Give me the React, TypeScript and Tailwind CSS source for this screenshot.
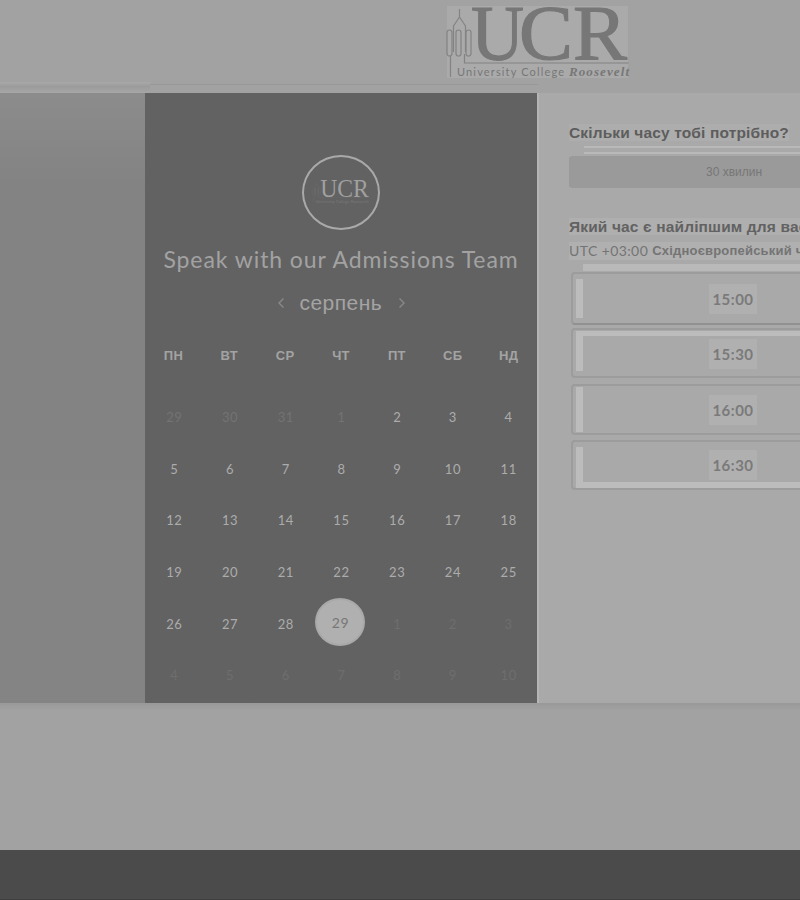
import React from "react";

const weekdays = ["ПН", "ВТ", "СР", "ЧТ", "ПТ", "СБ", "НД"];
const days = [
  29, 30, 31, 1, 2, 3, 4, 5, 6, 7, 8, 9, 10, 11, 12, 13, 14, 15, 16, 17, 18, 19,
  20, 21, 22, 23, 24, 25, 26, 27, 28, 29, 1, 2, 3, 4, 5, 6, 7, 8, 9, 10,
];
const slots = [
  { time: "15:00", box: "h-[53px] mb-[3px] border-b-[#919191]", inner: "border-l-[7px] my-[5px]" },
  { time: "15:30", box: "h-[50px] mb-[6px]", inner: "border-l-[7px] border-t-[5px] mt-[1px] mb-[5px]" },
  { time: "16:00", box: "h-[51px] mb-[5px]", inner: "border-l-[7px] my-[1px]" },
  { time: "16:30", box: "h-[50px]", inner: "border-l-[7px] border-b-[6px] mt-[5px]" },
];

function Wordmark() {
  return (
    <>
      <text x="30" y="59" textLength="53" lengthAdjust="spacingAndGlyphs" fontSize="79">U</text>
      <text x="78" y="59" textLength="54" lengthAdjust="spacingAndGlyphs" fontSize="79">C</text>
      <text x="132" y="59" textLength="54" lengthAdjust="spacingAndGlyphs" fontSize="79">R</text>
    </>
  );
}

function Tower() {
  return (
    <g fill="none" stroke="currentColor" strokeWidth="1.2">
      <rect x="6" y="30" width="5" height="26" rx="2.5" />
      <rect x="15" y="30" width="5" height="26" rx="2.5" />
      <rect x="25" y="30" width="5" height="26" rx="2.5" />
      <path d="M9.5 56v21M12.5 52V26l2-3 4-6 4 6 2 3v26M18.5 9v8M23.5 54v9h164" />
    </g>
  );
}

function HeaderLogo() {
  return (
    <svg width="195" height="82" viewBox="0 0 195 82" className="block text-[#777]">
      <rect x="6" y="6" width="181" height="72" fill="#aaa" />
      <g opacity="0.75"><Tower /></g>
      <g fill="currentColor" fontFamily="'Liberation Serif', serif">
        <g stroke="currentColor" strokeWidth="1.2"><Wordmark /></g>
        <text x="16" y="76" fontFamily="Lato, sans-serif" fontSize="11" textLength="107">
          University College
        </text>
        <text x="128" y="76" fontSize="13" fontStyle="italic" fontWeight="700" textLength="60">
          Roosevelt
        </text>
      </g>
    </svg>
  );
}

function Badge() {
  return (
    <div className="-ml-[1px] flex h-[75px] w-[78px] items-center justify-center rounded-[50%] border-2 border-[#a9a9a9]">
      <svg width="60" height="26" viewBox="0 0 195 82" className="-mt-1 text-[#777]">
        <g opacity="0.8"><Tower /></g>
        <g className="fill-[#a0a0a0]" fontFamily="'Liberation Serif', serif">
          <text x="30" y="61" textLength="158" lengthAdjust="spacingAndGlyphs" fontSize="79">UCR</text>
        </g>
        <text x="17" y="79" fill="#7c7c7c" fontFamily="Lato, sans-serif" fontSize="12" textLength="170">
          University College Roosevelt
        </text>
      </svg>
    </div>
  );
}

function Chevron({ d }: { d: string }) {
  return (
    <svg width="8" height="12" viewBox="0 0 8 12" fill="none" stroke="#898989" strokeWidth="1.4">
      <path d={d} />
    </svg>
  );
}

function Calendar() {
  return (
    <section className="flex h-[610px] w-[392px] shrink-0 flex-col items-center bg-[#626262] pt-[62px]">
      <Badge />
      <h1 className="mt-[13px] h-[32px] whitespace-nowrap font-['Lato',sans-serif] text-[23px] leading-[32px] tracking-[0.92px] text-[#a2a2a2]">
        Speak with our Admissions Team
      </h1>
      <div className="mt-[13px] flex h-[30px] items-center gap-[15px]">
        <Chevron d="M6.5 1.5 2 6l4.5 4.5" />
        <span className="w-[83px] whitespace-nowrap font-['Liberation_Sans',Arial,sans-serif] text-[21px] leading-[28px] tracking-[0.45px] text-[#a4a4a4]">
          серпень
        </span>
        <Chevron d="M1.5 1.5 6 6l-4.5 4.5" />
      </div>
      <div className="mt-[28px] grid w-[391px] grid-cols-7 text-center font-['Liberation_Sans',Arial,sans-serif] text-[13px] font-bold leading-[20px] tracking-[0.3px] text-[#a3a3a3]">
        {weekdays.map((d) => <span key={d}>{d}</span>)}
      </div>
      <div className="mt-[26px] grid h-[310px] w-[391px] shrink-0 grid-cols-7 grid-rows-6 pl-px font-['Lato',sans-serif] text-[13px] tracking-[0.6px]">
        {days.map((d, i) => {
          if (i === 31)
            return (
              <span key={i} className="-ml-[2px] -mt-[4px] flex items-center justify-center">
                <span className="flex h-[48px] w-[50px] shrink-0 items-center justify-center rounded-[50%] border-2 border-[#a9a9a9] bg-[#b0b0b0] text-[14px] text-[#777]">
                  29
                </span>
              </span>
            );
          const tone = i < 4 ? "text-[#737373]" : i > 31 ? "text-[#6e6e6e]" : "text-[#acacac]";
          return (
            <span key={i} className={`flex items-center justify-center ${tone}`}>{d}</span>
          );
        })}
      </div>
    </section>
  );
}

function TimePicker() {
  return (
    <section className="h-[610px] min-w-0 flex-1 overflow-hidden border-l-2 border-[#b5b5b5] bg-[#a9a9a9] pl-[30px] font-['Liberation_Sans',Arial,sans-serif]">
      <div className="w-[330px]">
        <h2 className="mt-[29px] h-[21px] whitespace-nowrap text-[15.5px] font-bold leading-[21px] tracking-[0.14px] text-[#5d5d5d]">
          <span className="bg-[#adadad]">Скільки часу тобі потрібно?</span>
        </h2>
        <div className="ml-[15px] mt-[3px] h-[8px] border-y-2 border-[#b9b9b9]" />
        <div className="mt-[2px] h-[32px] rounded-[3px] bg-[#9a9a9a] text-center text-[12px] leading-[32px] text-[#777]">
          30 хвилин
        </div>
        <h2 className="mt-[29px] h-[20px] whitespace-nowrap text-[15.5px] font-bold leading-[20px] tracking-[0.14px] text-[#626262]">
          <span className="bg-[#afafaf]">Який час є найліпшим для вас?</span>
        </h2>
        <p className="mt-[5px] flex h-[18px] w-max items-center gap-[4px] whitespace-nowrap bg-[#b0b0b0] text-[13px] font-bold leading-[18px] tracking-[0.2px] text-[#747474]">
          <span className="font-['Lato',sans-serif] text-[14px] font-normal tracking-[0.4px]">UTC +03:00</span>
          <span>Східноєвропейський час</span>
        </p>
        <div className="ml-[14px] mt-[4px] h-[7px] bg-[#b9b9b9]" />
        <div className="ml-[2px] mt-[1px]">
          {slots.map((s) => (
            <div key={s.time} className={`flex w-[325px] rounded-[4px] border-2 border-[#9c9c9c] pl-[3px] ${s.box}`}>
              <div className={`flex flex-1 items-center justify-center border-[#bcbcbc] ${s.inner}`}>
                <span className="mr-[11px] bg-[#b0b0b0] px-[3px] py-[6px] font-['Lato',sans-serif] text-[15px] font-bold leading-[18px] tracking-[0.5px] text-[#7a7a7a]">
                  {s.time}
                </span>
              </div>
            </div>
          ))}
        </div>
      </div>
    </section>
  );
}

export default function App() {
  return (
    <div className="flex h-[900px] w-[800px] flex-col overflow-hidden bg-[#a2a2a2]">
      <header className="flex h-[82px] shrink-0 pl-[441px]"><HeaderLogo /></header>
      <div className="flex h-[11px] shrink-0">
        <div className="w-[150px] bg-linear-to-b from-[#a6a6a6] from-10% via-[#9b9b9b] via-40% to-[#a7a7a7]" />
        <div className="mt-[2px] h-px w-[388px] bg-[#989898]" />
      </div>
      <main className="flex h-[610px] shrink-0">
        <aside className="w-[145px] shrink-0 bg-linear-to-b from-[#8c8c8c] via-[#838383] via-15% to-[#848484]" />
        <Calendar />
        <TimePicker />
      </main>
      <div className="h-[147px] shrink-0 bg-linear-to-b from-[#999] to-[#a2a2a2] to-5%" />
      <footer className="h-[50px] shrink-0 border-b border-[#3f3f3f] bg-[#4b4b4b]" />
    </div>
  );
}
